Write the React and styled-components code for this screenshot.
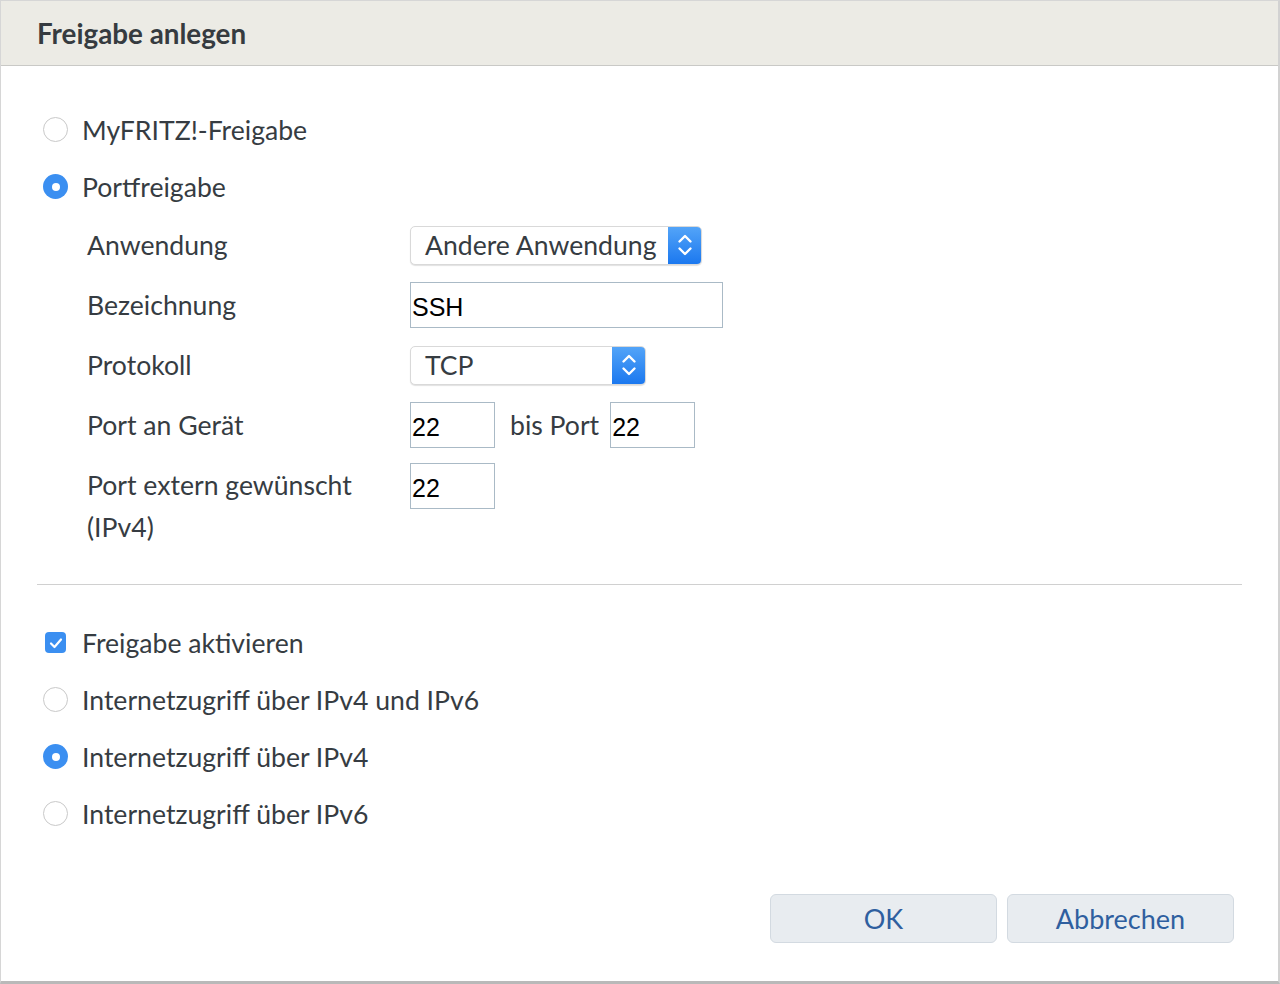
import React from 'react';
import styled, { createGlobalStyle } from 'styled-components';

const GlobalStyle = createGlobalStyle`
	html, body {
		margin: 0;
		padding: 0;
		background: #ffffff;
	}
	body {
		font-family: 'Lato', 'Open Sans', sans-serif;
		color: #363c42;
	}
	* {
		box-sizing: border-box;
	}
`;

const Dialog = styled.div`
	width: 1280px;
	height: 984px;
	display: flex;
	flex-direction: column;
	border-top: 1px solid #d6d6d6;
	border-left: 1px solid #d6d6d6;
	border-right: 2px solid #d2d2d2;
	border-bottom: 3px solid #b9b9b9;
	background: #ffffff;
`;

const Header = styled.div`
	height: 65px;
	flex-shrink: 0;
	display: flex;
	align-items: center;
	padding-left: 36px;
	background: #ecebe5;
	border-bottom: 1px solid #c9c9c6;
`;

const Title = styled.h1`
	margin: 0;
	font-size: 27.8px;
	font-weight: 700;
	color: #363b40;
`;

const Body = styled.div`
	flex: 1;
	display: flex;
	flex-direction: column;
	padding: 35px 36px 0 36px;
`;

const OptionRow = styled.label`
	height: 57px;
	display: flex;
	align-items: center;
	gap: 14px;
	padding-left: 6px;
	font-size: 26.6px;
`;

const Radio = styled.span`
	width: 25px;
	height: 25px;
	border-radius: 50%;
	flex-shrink: 0;
	display: flex;
	align-items: center;
	justify-content: center;
	background: ${({ checked }) => (checked ? '#3b8ff1' : '#ffffff')};
	border: ${({ checked }) => (checked ? 'none' : '1.5px solid #c9c9c9')};

	&::after {
		content: '';
		width: 8px;
		height: 8px;
		border-radius: 50%;
		background: #ffffff;
		display: ${({ checked }) => (checked ? 'block' : 'none')};
	}
`;

const Checkbox = styled.span`
	width: 21px;
	height: 21px;
	margin: 0 2px;
	border-radius: 4px;
	flex-shrink: 0;
	display: flex;
	align-items: center;
	justify-content: center;
	background: #3b8ff1;
`;

const Form = styled.div`
	display: flex;
	flex-direction: column;
	padding-left: 50px;
`;

const FormRow = styled.div`
	height: ${({ tall }) => (tall ? 'auto' : '60px')};
	display: flex;
	align-items: ${({ tall }) => (tall ? 'flex-start' : 'center')};
	margin-top: ${({ tall }) => (tall ? '9px' : '0')};
`;

const Label = styled.div`
	width: 323px;
	flex-shrink: 0;
	font-size: 26.6px;
	line-height: 42px;
`;

const Select = styled.div`
	width: ${({ width }) => width}px;
	height: 39px;
	display: flex;
	align-items: stretch;
	border: 1px solid #d9d9d9;
	border-radius: 5px;
	box-shadow: 0 1px 1px rgba(0, 0, 0, 0.12);
	background: #ffffff;
	overflow: hidden;
`;

const SelectValue = styled.div`
	flex: 1;
	display: flex;
	align-items: center;
	padding-left: 14px;
	font-size: 26.6px;
	color: #363c42;
`;

const SelectArrow = styled.div`
	width: 33px;
	display: flex;
	align-items: center;
	justify-content: center;
	background: linear-gradient(#53a4f8, #1b78ef);
`;

const Input = styled.div`
	width: ${({ width }) => width}px;
	height: 46px;
	display: flex;
	align-items: center;
	padding: 4px 0 0 1px;
	border: 1.5px solid #aabac6;
	background: #ffffff;
	font-family: 'Liberation Sans', Arial, sans-serif;
	font-size: 25px;
	color: #000000;
	margin-top: ${({ offset }) => offset || 0}px;
`;

const Between = styled.span`
	font-size: 26.6px;
	margin: 0 11px 0 15px;
`;

const Divider = styled.hr`
	margin: 36px 0 29px 0;
	border: none;
	border-top: 1.5px solid #d0d0d0;
`;

const Footer = styled.div`
	display: flex;
	justify-content: flex-end;
	gap: 10px;
	padding: 52px 8px 0 0;
`;

const Button = styled.button`
	width: 227px;
	height: 49px;
	border: 1.5px solid #d3dae1;
	border-radius: 6px;
	background: #e8ecf0;
	font-family: 'Lato', 'Open Sans', sans-serif;
	font-size: 27px;
	color: #2f5f9f;
	cursor: pointer;
`;

const Arrows = () => (
	<svg width="18" height="28" viewBox="0 0 18 28" fill="none">
		<path d="M3.5 10.5 L9 5 L14.5 10.5" stroke="#fff" strokeWidth="2.4" strokeLinecap="round" strokeLinejoin="round" />
		<path d="M3.5 17.5 L9 23 L14.5 17.5" stroke="#fff" strokeWidth="2.4" strokeLinecap="round" strokeLinejoin="round" />
	</svg>
);

const Check = () => (
	<svg width="14" height="12" viewBox="0 0 14 12" fill="none">
		<path d="M2 6.5 L5.5 10 L12 2.5" stroke="#fff" strokeWidth="2.2" strokeLinecap="round" strokeLinejoin="round" />
	</svg>
);

const App = () => {
	return (
		<>
			<GlobalStyle />
			<Dialog>
				<Header>
					<Title>Freigabe anlegen</Title>
				</Header>
				<Body>
					<OptionRow>
						<Radio />
						MyFRITZ!-Freigabe
					</OptionRow>
					<OptionRow>
						<Radio checked />
						Portfreigabe
					</OptionRow>
					<Form>
						<FormRow>
							<Label>Anwendung</Label>
							<Select width={292}>
								<SelectValue>Andere Anwendung</SelectValue>
								<SelectArrow><Arrows /></SelectArrow>
							</Select>
						</FormRow>
						<FormRow>
							<Label>Bezeichnung</Label>
							<Input width={313}>SSH</Input>
						</FormRow>
						<FormRow>
							<Label>Protokoll</Label>
							<Select width={236}>
								<SelectValue>TCP</SelectValue>
								<SelectArrow><Arrows /></SelectArrow>
							</Select>
						</FormRow>
						<FormRow>
							<Label>Port an Gerät</Label>
							<Input width={85}>22</Input>
							<Between>bis Port</Between>
							<Input width={85}>22</Input>
						</FormRow>
						<FormRow tall>
							<Label>
								Port extern gewünscht
								<br />
								(IPv4)
							</Label>
							<Input width={85} offset={-1}>22</Input>
						</FormRow>
					</Form>
					<Divider />
					<OptionRow>
						<Checkbox><Check /></Checkbox>
						Freigabe aktivieren
					</OptionRow>
					<OptionRow>
						<Radio />
						Internetzugriff über IPv4 und IPv6
					</OptionRow>
					<OptionRow>
						<Radio checked />
						Internetzugriff über IPv4
					</OptionRow>
					<OptionRow>
						<Radio />
						Internetzugriff über IPv6
					</OptionRow>
					<Footer>
						<Button>OK</Button>
						<Button>Abbrechen</Button>
					</Footer>
				</Body>
			</Dialog>
		</>
	);
};

export default App;
